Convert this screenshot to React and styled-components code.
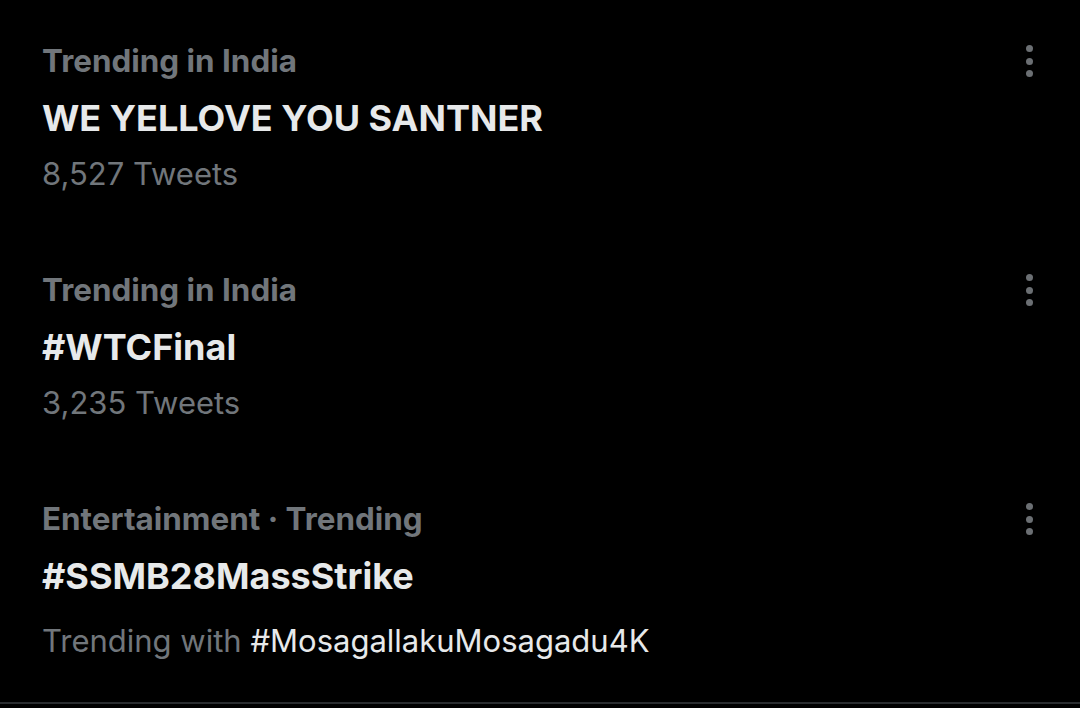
import React from "react";
import styled, { createGlobalStyle } from "styled-components";

const Global = createGlobalStyle`
  html, body { margin: 0; padding: 0; background: #000; }
  body { font-family: Inter, "Noto Sans", "Liberation Sans", sans-serif; }
`;

const Page = styled.div`
  width: 1080px;
  height: 708px;
  background: #000;
  display: flex;
  flex-direction: column;
  overflow: hidden;
`;

const List = styled.div`
  display: flex;
  flex-direction: column;
  border-bottom: 2px solid #2a2d30;
`;

const Item = styled.div`
  display: flex;
  align-items: flex-start;
  padding: 39px 36px ${(p) => p.$bottom || 34}px 42px;
`;

const Body = styled.div`
  flex: 1;
  display: flex;
  flex-direction: column;
`;

const Label = styled.div`
  font-size: 31.4px;
  line-height: 44px;
  font-weight: 700;
  color: #71767b;
`;

const Title = styled.div`
  font-size: 36px;
  line-height: 70px;
  font-weight: 700;
  color: #e7e9ea;
`;

const Meta = styled.div`
  font-size: 31px;
  line-height: 42px;
  font-weight: 400;
  color: #71767b;
  margin-top: ${(p) => p.$offset || 0}px;
`;

const Tag = styled.span`
  color: #e7e9ea;
`;

const MenuButton = styled.button`
  width: 30px;
  height: 44px;
  padding: 0;
  border: 0;
  background: transparent;
  display: flex;
  flex-direction: column;
  align-items: center;
  justify-content: center;
  gap: 5.5px;
`;

const Dot = styled.span`
  width: 7px;
  height: 7px;
  border-radius: 50%;
  background: #6b6f73;
`;

const Menu = () => (
  <MenuButton aria-label="More">
    <Dot />
    <Dot />
    <Dot />
  </MenuButton>
);

const trends = [
  { label: "Trending in India", title: "WE YELLOVE YOU SANTNER", meta: "8,527 Tweets" },
  { label: "Trending in India", title: "#WTCFinal", meta: "3,235 Tweets" },
  {
    label: "Entertainment · Trending",
    title: "#SSMB28MassStrike",
    with: "#MosagallakuMosagadu4K",
  },
];

export default function App() {
  return (
    <>
      <Global />
      <Page>
        <List>
          {trends.map((t, i) => (
            <Item key={i} $bottom={t.with ? 40 : 34}>
              <Body>
                <Label>{t.label}</Label>
                <Title>{t.title}</Title>
                {t.with ? (
                  <Meta $offset={9}>
                    Trending with <Tag>{t.with}</Tag>
                  </Meta>
                ) : (
                  <Meta>{t.meta}</Meta>
                )}
              </Body>
              <Menu />
            </Item>
          ))}
        </List>
      </Page>
    </>
  );
}
